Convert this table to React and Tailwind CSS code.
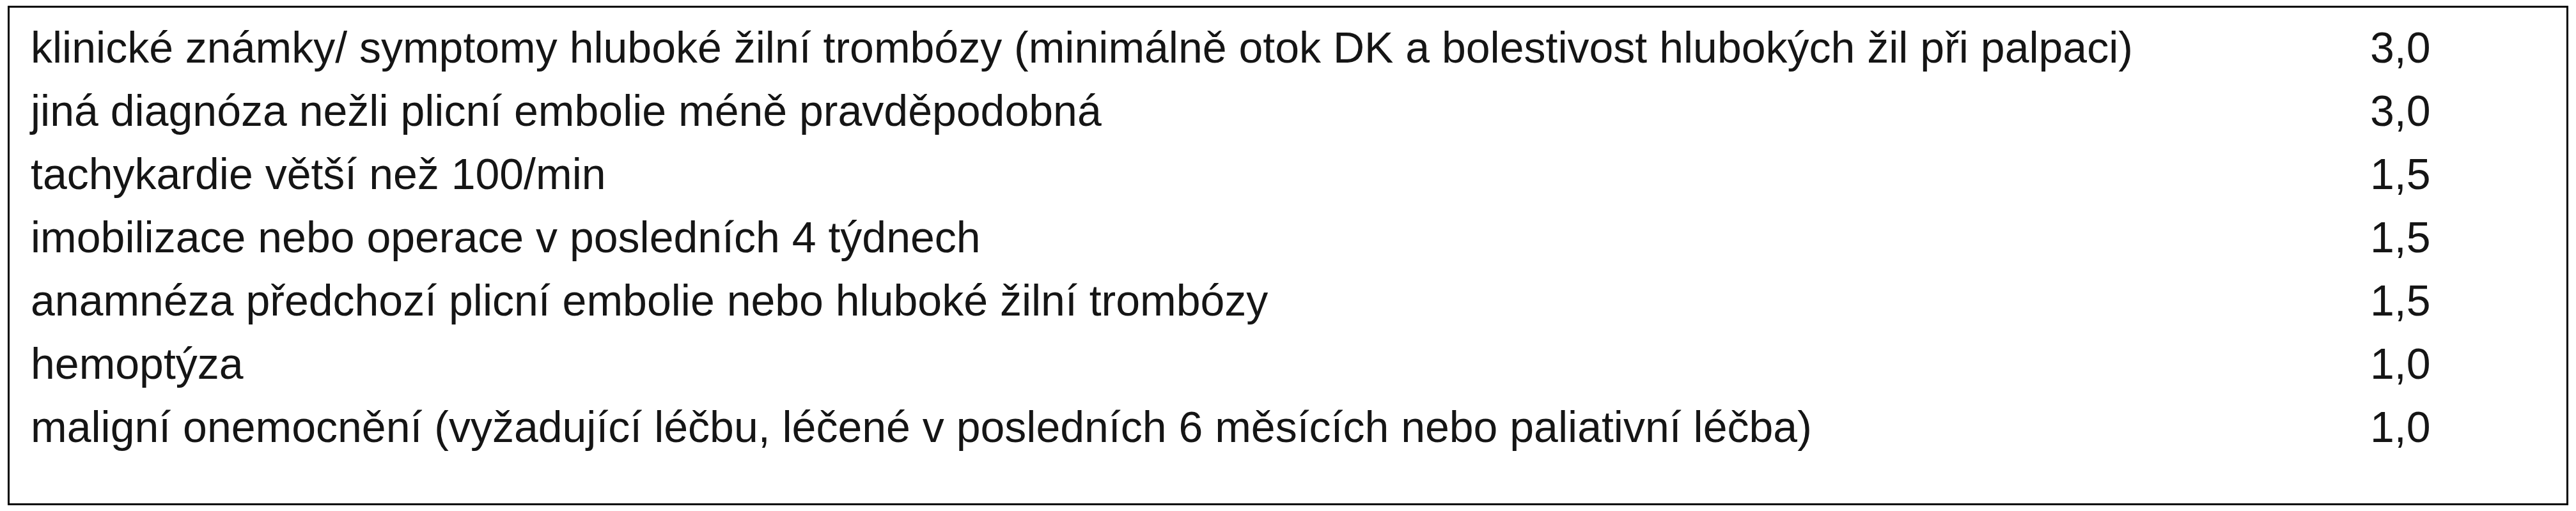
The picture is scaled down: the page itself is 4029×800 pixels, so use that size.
export default function App() {
  const rows = [
    ["klinické známky/ symptomy hluboké žilní trombózy (minimálně otok DK a bolestivost hlubokých žil při palpaci)", "3,0"],
    ["jiná diagnóza nežli plicní embolie méně pravděpodobná", "3,0"],
    ["tachykardie větší než 100/min", "1,5"],
    ["imobilizace nebo operace v posledních 4 týdnech", "1,5"],
    ["anamnéza předchozí plicní embolie nebo hluboké žilní trombózy", "1,5"],
    ["hemoptýza", "1,0"],
    ["maligní onemocnění (vyžadující léčbu, léčené v posledních 6 měsících nebo paliativní léčba)", "1,0"],
  ];
  return (
    <div className="w-[4029px] h-[800px] bg-white pt-[9px] pl-[12px]">
      <div
        className="w-[4005px] h-[782px] border-[3px] border-black bg-white pt-[13px] pl-[33px] text-[68px] leading-[99px] text-[#151515]"
        style={{ fontFamily: '"Liberation Sans Narrow", "Liberation Sans", sans-serif' }}
      >
        <div className="grid grid-cols-[3659px_1fr]">
          {rows.map(([label, value], i) => (
            <div key={i} className="contents">
              <div className="whitespace-nowrap">{label}</div>
              <div className="whitespace-nowrap">{value}</div>
            </div>
          ))}
        </div>
      </div>
    </div>
  );
}
